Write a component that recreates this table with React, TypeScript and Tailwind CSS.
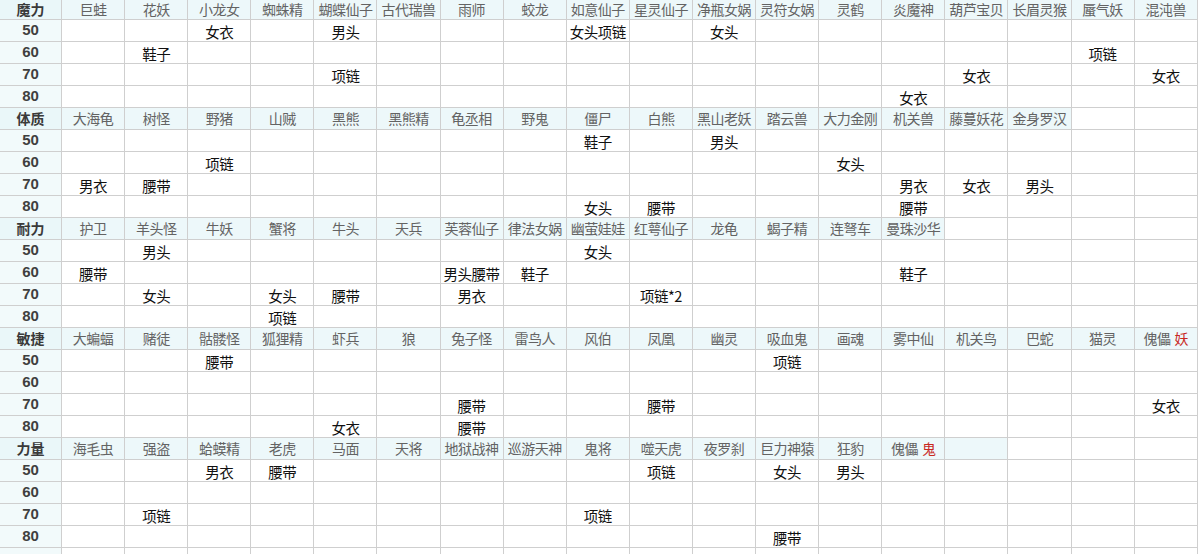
import React from "react";

type Cell = string | null;

interface Group {
  label: string;
  // names across the top row; "" means a tinted but empty header cell
  names: string[];
  // each entry maps column index (1-based after label) -> text
  rows: Record<number, string>[];
}

const LEVELS = ["50", "60", "70", "80"];
const COLS = 18;

const GROUPS: Group[] = [
  {
    label: "魔力",
    names: ["巨蛙", "花妖", "小龙女", "蜘蛛精", "蝴蝶仙子", "古代瑞兽", "雨师", "蛟龙", "如意仙子", "星灵仙子", "净瓶女娲", "灵符女娲", "灵鹤", "炎魔神", "葫芦宝贝", "长眉灵猴", "蜃气妖", "混沌兽"],
    rows: [
      { 3: "女衣", 5: "男头", 9: "女头项链", 11: "女头" },
      { 2: "鞋子", 17: "项链" },
      { 5: "项链", 15: "女衣", 18: "女衣" },
      { 14: "女衣" },
    ],
  },
  {
    label: "体质",
    names: ["大海龟", "树怪", "野猪", "山贼", "黑熊", "黑熊精", "龟丞相", "野鬼", "僵尸", "白熊", "黑山老妖", "踏云兽", "大力金刚", "机关兽", "藤蔓妖花", "金身罗汉"],
    rows: [
      { 9: "鞋子", 11: "男头" },
      { 3: "项链", 13: "女头" },
      { 1: "男衣", 2: "腰带", 14: "男衣", 15: "女衣", 16: "男头" },
      { 9: "女头", 10: "腰带", 14: "腰带" },
    ],
  },
  {
    label: "耐力",
    names: ["护卫", "羊头怪", "牛妖", "蟹将", "牛头", "天兵", "芙蓉仙子", "律法女娲", "幽萤娃娃", "红萼仙子", "龙龟", "蝎子精", "连弩车", "曼珠沙华"],
    rows: [
      { 2: "男头", 9: "女头" },
      { 1: "腰带", 7: "男头腰带", 8: "鞋子", 14: "鞋子" },
      { 2: "女头", 4: "女头", 5: "腰带", 7: "男衣", 10: "项链*2" },
      { 4: "项链" },
    ],
  },
  {
    label: "敏捷",
    names: ["大蝙蝠", "赌徒", "骷髅怪", "狐狸精", "虾兵", "狼", "兔子怪", "雷鸟人", "风伯", "凤凰", "幽灵", "吸血鬼", "画魂", "雾中仙", "机关鸟", "巴蛇", "猫灵", "傀儡|妖"],
    rows: [
      { 3: "腰带", 12: "项链" },
      {},
      { 7: "腰带", 10: "腰带", 18: "女衣" },
      { 5: "女衣", 7: "腰带" },
    ],
  },
  {
    label: "力量",
    names: ["海毛虫", "强盗", "蛤蟆精", "老虎", "马面", "天将", "地狱战神", "巡游天神", "鬼将", "噬天虎", "夜罗刹", "巨力神猿", "狂豹", "傀儡|鬼", ""],
    rows: [
      { 3: "男衣", 4: "腰带", 10: "项链", 12: "女头", 13: "男头" },
      {},
      { 2: "项链", 9: "项链" },
      { 12: "腰带" },
    ],
  },
];

const FONT = "font-['Noto_Sans_CJK_SC','Noto_Sans',sans-serif]";

function HeaderName({ name }: { name: string }) {
  const [base, mark] = name.split("|");
  return (
    <span>
      {base}
      {mark ? <span className="ml-1 text-[#c8281f]">{mark}</span> : null}
    </span>
  );
}

function GroupBlock({ group, first }: { group: Group; first: boolean }) {
  const h = first ? "h-[20px]" : "h-[22px]";
  const cells: Cell[] = Array.from({ length: COLS }, (_, i) => (i < group.names.length ? group.names[i] : null));
  return (
    <>
      <div className={`${h} flex items-center justify-center border-b border-r border-[#cfcfcf] bg-[#eaf7f9] text-[14px] font-bold text-[#3a3a3a]`}>
        {group.label}
      </div>
      {cells.map((n, i) => (
        <div
          key={i}
          className={`${h} flex items-center justify-center whitespace-nowrap border-b border-r border-[#cfcfcf] text-[14px] tracking-[-0.5px] text-[#636363] ${
            n === null ? "bg-white" : "bg-[#edf8fa]"
          }`}
        >
          {n ? <HeaderName name={n} /> : null}
        </div>
      ))}
      {group.rows.map((row, r) => (
        <React.Fragment key={r}>
          <div className="flex h-[22px] items-center justify-center border-b border-r border-[#cfcfcf] bg-[#f2fafb] font-['Liberation_Sans',sans-serif] text-[15px] font-bold text-[#3f3f3f]">
            {LEVELS[r]}
          </div>
          {Array.from({ length: COLS }, (_, c) => (
            <div
              key={c}
              className="flex h-[22px] items-center justify-center whitespace-nowrap border-b border-r border-[#cfcfcf] bg-white pt-[2px] text-[14.5px] tracking-[-0.5px] text-[#111]"
            >
              {row[c + 1] ?? ""}
            </div>
          ))}
        </React.Fragment>
      ))}
    </>
  );
}

export default function App() {
  return (
    <div className={`h-[554px] w-[1200px] overflow-hidden bg-white ${FONT}`}>
      <div className="grid w-[1198px] grid-cols-[62px_repeat(18,63.1px)]">
        {GROUPS.map((g, i) => (
          <GroupBlock key={g.label} group={g} first={i === 0} />
        ))}
        <div className="h-[22px] border-r border-[#cfcfcf] bg-[#f2fafb]" />
        {Array.from({ length: COLS }, (_, c) => (
          <div key={c} className="h-[22px] border-r border-[#cfcfcf] bg-white" />
        ))}
      </div>
    </div>
  );
}
